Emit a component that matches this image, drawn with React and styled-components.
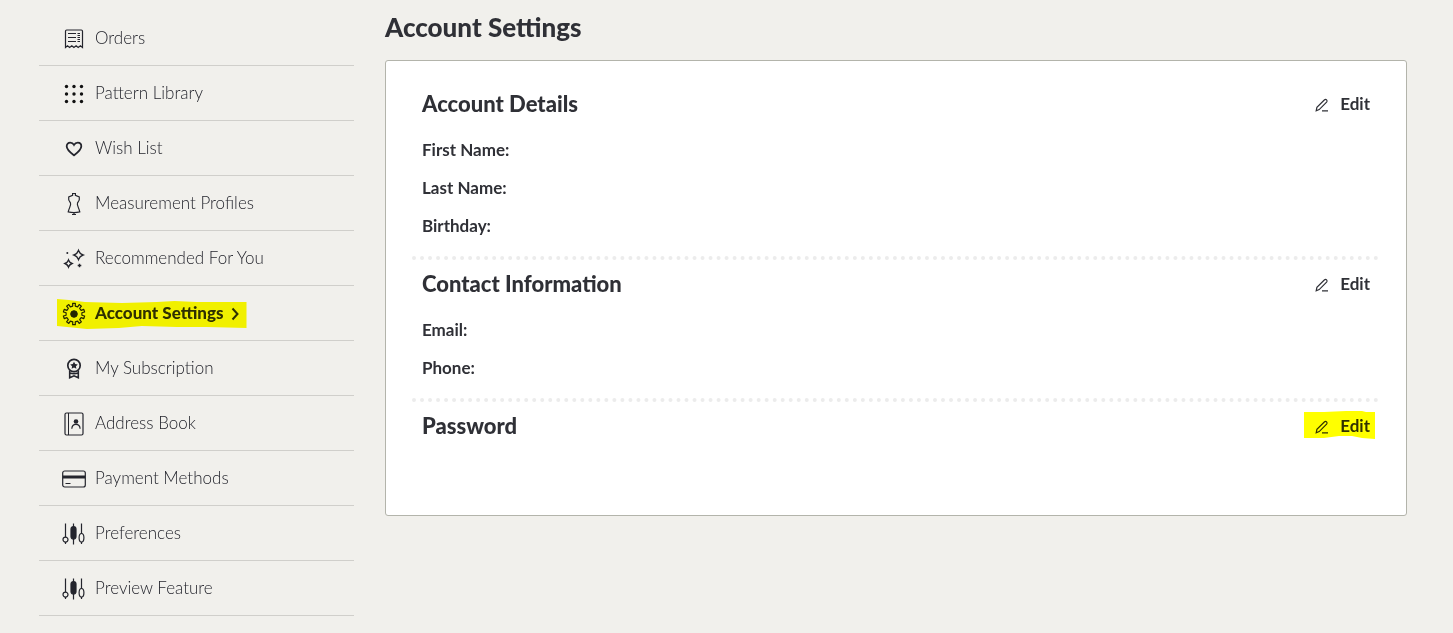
import React from 'react'
import styled, { createGlobalStyle, css } from 'styled-components'

const menu = [
  { label: 'Orders', icon: 'orders' },
  { label: 'Pattern Library', icon: 'grid' },
  { label: 'Wish List', icon: 'heart' },
  { label: 'Measurement Profiles', icon: 'mannequin' },
  { label: 'Recommended For You', icon: 'sparkles' },
  { label: 'Account Settings', icon: 'gear', active: true },
  { label: 'My Subscription', icon: 'award' },
  { label: 'Address Book', icon: 'book' },
  { label: 'Payment Methods', icon: 'card' },
  { label: 'Preferences', icon: 'sliders' },
  { label: 'Preview Feature', icon: 'sliders' },
]

const sections = [
  { title: 'Account Details', fields: ['First Name:', 'Last Name:', 'Birthday:'] },
  { title: 'Contact Information', fields: ['Email:', 'Phone:'] },
  { title: 'Password', fields: [], marked: true },
]

// outline of a cog with flat teeth, centred on 12,12
const gearPath = (teeth, outer, inner) => {
  const step = (Math.PI * 2) / teeth
  const at = (r, a) => `${(12 + r * Math.cos(a)).toFixed(2)} ${(12 + r * Math.sin(a)).toFixed(2)}`
  const points = []
  for (let i = 0; i < teeth; i++) {
    const a = i * step - Math.PI / 2
    points.push(at(inner, a - step * 0.25), at(outer, a - step * 0.2), at(outer, a + step * 0.2), at(inner, a + step * 0.25))
  }
  return `M${points.join('L')}Z`
}

const icons = {
  orders: (
    <>
      <path d="M3.5 20.5V4.200q0-1.200 1.200-1.200h14.600q1.200 0 1.200 1.200v16.300l-2.100-1.700-2.200 1.700-2.100-1.700-2.200 1.700-2.100-1.700-2.200 1.700-2.100-1.700z" strokeWidth="1.200" />
      <path d="M6 6.500h8M6 10.500h8M6 14.500h8M15.500 6.500h2.500M15.500 8.500h2.500M15.500 10.500h2.500M15.500 12.500h2.500M15.500 14.500h2.500" />
    </>
  ),
  grid: (
    <g fill="#111" stroke="none">
      {[4.5, 12, 19.5].map((y) => [4.5, 12, 19.5].map((x) => <circle key={`${x}-${y}`} cx={x} cy={y} r="1.7" />))}
    </g>
  ),
  heart: (
    <path
      strokeWidth="1.8"
      d="M12 18.300C9 16 4.700 12.900 4.700 9.200c0-2.200 1.600-3.600 3.500-3.600 1.600 0 3 .9 3.800 2.300.8-1.400 2.200-2.300 3.800-2.300 1.900 0 3.500 1.400 3.500 3.600 0 3.700-4.300 6.800-7.300 9.100z"
    />
  ),
  mannequin: (
    <path
      strokeWidth="1.200"
      d="M10.600 1.500h2.800v1.800l3.900 1.700c.6 2.200.1 3.800-1.800 6-.9 1.900 1.300 4.500 2.300 8.900-3.600.8-8 .8-11.600 0 1-4.400 3.200-7 2.300-8.900-1.900-2.200-2.400-3.800-1.800-6l3.900-1.700zM12 20.500v2M10 22.500h4"
    />
  ),
  sparkles: (
    <>
      <path
        strokeWidth="1.400"
        d="M16.500 3.500q1.200 3.300 4.500 4.500-3.300 1.200-4.500 4.500-1.200-3.300-4.500-4.500 3.300-1.200 4.500-4.500zM6.500 13q1 2.500 3.500 3.500-2.500 1-3.500 3.500-1-2.500-3.500-3.500 2.500-1 3.500-3.500z"
      />
      <path d="M17.500 16.700v3.600M15.700 18.500h3.600" strokeWidth="1.400" />
      <circle cx="5.300" cy="6" r="1" fill="currentColor" stroke="none" />
    </>
  ),
  gear: (
    <>
      <path d={gearPath(10, 10.8, 8)} strokeLinejoin="round" strokeWidth="1.200" />
      <circle cx="12" cy="12" r="3.300" fill="currentColor" />
    </>
  ),
  award: (
    <>
      <circle cx="12" cy="8.500" r="6.200" strokeWidth="1.700" />
      <path fill="currentColor" stroke="none" d="M12 4.700l1.200 2.400 2.600.3-1.900 1.800.5 2.600-2.400-1.300-2.400 1.300.5-2.600-1.900-1.800 2.600-.3z" />
      <path strokeWidth="1.600" d="M7.700 13.500v7.200l4.300-1.900 4.300 1.900v-7.200M8 16q4 1.200 8 0" />
    </>
  ),
  book: (
    <>
      <rect x="3" y="1" width="18" height="22" rx="1.500" strokeWidth="1.200" />
      <path d="M6.500 1v22" />
      <circle cx="14" cy="9.500" r="2.300" fill="currentColor" stroke="none" />
      <path d="M9.800 16.800c.3-5.800 8-5.800 8.300 0" strokeWidth="1.200" />
    </>
  ),
  card: (
    <>
      <rect x="0.700" y="4" width="22.600" height="16" rx="2" strokeWidth="1.200" />
      <path strokeWidth="3" d="M.7 10h22.600" />
      <path d="M3.500 16.500h5" />
    </>
  ),
  sliders: (
    <g strokeWidth="1.200">
      <path d="M3.500 1.500v13.800M3.500 20v2M11.500 1.500v21M19.500 1.500v10M19.500 20v2" />
      <circle cx="3.500" cy="17.600" r="2.500" />
      <rect x="9" y="4.500" width="5" height="12.500" rx="2.500" fill="currentColor" />
      <ellipse cx="19.500" cy="15.800" rx="2.400" ry="4.300" />
    </g>
  ),
}

const App = () => {
  return (
    <>
      <GlobalStyle />
      <Page>
        <nav aria-label="Account">
          <MenuList>
            {menu.map(({ label, icon, active }) => (
              <MenuItem key={label}>
                <MenuLink href="#" $active={active} aria-current={active ? 'page' : undefined}>
                  <MenuIcon viewBox="0 0 24 24" aria-hidden="true">{icons[icon]}</MenuIcon>
                  {label}
                  {active && (
                    <>
                      <Chevron viewBox="0 0 8 14" aria-hidden="true">
                        <path d="M1.500 1.500l5 5.500-5 5.500" />
                      </Chevron>
                      <MenuMarker viewBox="0 0 190 30" preserveAspectRatio="none" aria-hidden="true">
                        <path d="M0 0L12 1 28 3 65 4 100 3 118 2 140 3 190 3V29L150 28 120 28 85 27 62 29 30 30 0 27z" />
                      </MenuMarker>
                    </>
                  )}
                </MenuLink>
              </MenuItem>
            ))}
          </MenuList>
        </nav>
        <main>
          <Title>Account Settings</Title>
          <Card>
            {sections.map(({ title, fields, marked }) => (
              <Section key={title}>
                <SectionHeader>
                  <SectionTitle>{title}</SectionTitle>
                  <EditButton type="button" aria-label={`Edit ${title}`}>
                    <EditIcon viewBox="0 0 14 14" aria-hidden="true">
                      <path d="M1.200 12.800l.7-3.400L9.300 2q1.300-1 2.300-.1 1 1 0 2.200L4.200 11.600zM7 12.800h6" />
                    </EditIcon>
                    Edit
                    {marked && (
                      <EditMarker viewBox="0 0 71 28" preserveAspectRatio="none" aria-hidden="true">
                        <path d="M0 1L20 1 42 0 58 0 62 1 71 1V28L58 27 48 25 35 25 20 27 0 27z" />
                      </EditMarker>
                    )}
                  </EditButton>
                </SectionHeader>
                {fields.length > 0 && (
                  <dl>
                    {fields.map((field) => (
                      <Field key={field}>
                        <dt>{field}</dt>
                        <dd />
                      </Field>
                    ))}
                  </dl>
                )}
              </Section>
            ))}
          </Card>
        </main>
      </Page>
    </>
  )
}

const GlobalStyle = createGlobalStyle`
  * {
    box-sizing: border-box;
    margin: 0;
    padding: 0;
  }
  body {
    background: #f1f0ec;
    color: #2f3036;
    font-family: Lato, 'Open Sans', sans-serif;
  }
`

const Page = styled.div`
  display: grid;
  grid-template-columns: 315px 1fr;
  gap: 31px;
  padding: 11px 46px 17px 39px;
`

const MenuList = styled.ul`
  list-style: none;
`

const MenuItem = styled.li`
  border-bottom: 1px solid #d0cfcb;
`

const MenuLink = styled.a`
  position: relative;
  display: inline-flex;
  align-items: center;
  height: 54px;
  padding: 0 0 2px 23px;
  color: #24252d;
  font-size: 17px;
  font-weight: 300;
  text-decoration: none;
  ${({ $active }) =>
    $active &&
    css`
      color: #2f3036;
      font-weight: 900;
    `}
`

const MenuIcon = styled.svg`
  width: 24px;
  height: 24px;
  margin: 4px 9px 0 0;
  color: #24252d;
  fill: none;
  stroke: currentColor;
`

const Chevron = styled.svg`
  width: 8px;
  height: 14px;
  margin: 4px 0 0 7px;
  fill: none;
  stroke: currentColor;
  stroke-width: 2;
`

// hand-drawn highlighter strokes laid over the text
const markerStyle = css`
  position: absolute;
  fill: #ffff00;
  mix-blend-mode: multiply;
  pointer-events: none;
`

const MenuMarker = styled.svg`
  ${markerStyle}
  top: 13px;
  left: 18px;
  width: calc(100% - 10px);
  height: 30px;
`

const Title = styled.h1`
  margin-bottom: 17px;
  font-size: 26px;
  font-weight: 900;
  line-height: 32px;
`

const Card = styled.div`
  padding: 19px 27px 67px 26px;
  background: #fff;
  border: 1px solid #b3b4ab;
  border-radius: 3px;
`

const Section = styled.section`
  padding: 0 9px 0 10px;

  dl {
    padding: 4px 0 12px;
  }
  & + & {
    border-top: 4px dotted #ececec;
  }
`

const SectionHeader = styled.div`
  display: flex;
  justify-content: space-between;
  align-items: center;
  height: 46px;
`

const SectionTitle = styled.h2`
  font-size: 22px;
  font-weight: 900;
`

const EditButton = styled.button`
  position: relative;
  display: flex;
  align-items: center;
  gap: 11px;
  background: none;
  border: 0;
  color: inherit;
  font: inherit;
  font-size: 17px;
  font-weight: 700;
  cursor: pointer;
`

const EditIcon = styled.svg`
  width: 14px;
  height: 14px;
  margin-top: 4px;
  fill: none;
  stroke: currentColor;
  stroke-width: 1.200;
`

const EditMarker = styled.svg`
  ${markerStyle}
  top: -4px;
  left: -11px;
  width: 71px;
  height: 28px;
`

const Field = styled.div`
  display: flex;
  align-items: center;
  height: 38px;
  font-size: 17px;
  font-weight: 700;
`

export default App
